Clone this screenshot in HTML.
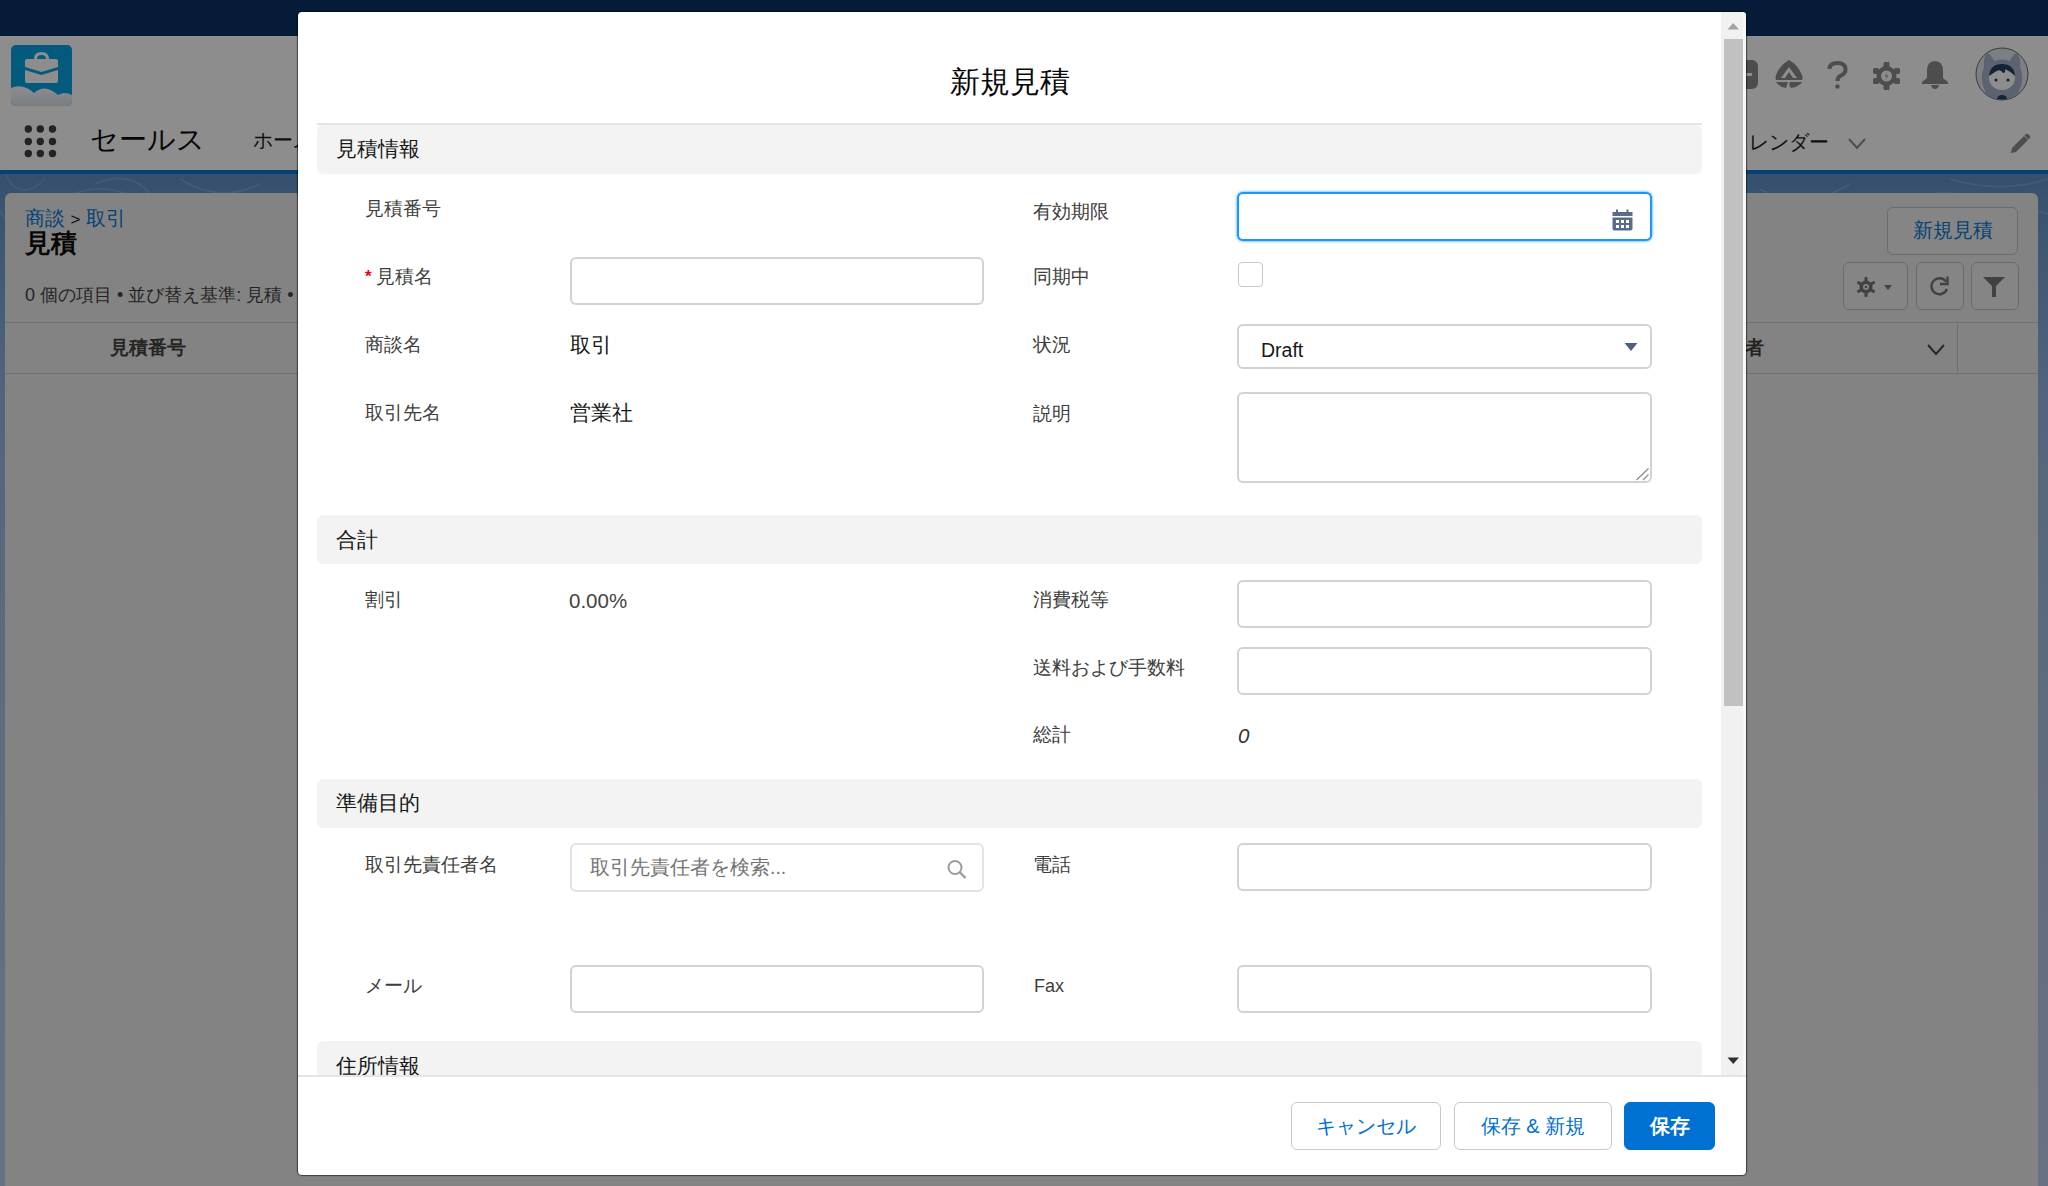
<!DOCTYPE html>
<html><head><meta charset="utf-8">
<style>
*{box-sizing:border-box;margin:0;padding:0}
html,body{width:2048px;height:1186px;overflow:hidden;background:#fff;font-family:"Liberation Sans",sans-serif;color:#181818}
.a{position:absolute}
/* background page */
#topbar{left:0;top:0;width:2048px;height:36px;background:#032d60}
#hdr{left:0;top:36px;width:2048px;height:134px;background:#fff}
#brand{left:0;top:170px;width:2048px;height:4px;background:#0070d2}
#bgblue{left:0;top:174px;width:2048px;height:1012px;background:linear-gradient(#5a8ec5 0%,#91b5e1 22%,#a7c1e3 52%,#b8ceea 100%)}
#card{left:5px;top:193px;width:2033px;height:1000px;background:#ededed;border-radius:6px}
#overlay{left:0;top:0;width:2048px;height:1186px;background:rgba(8,7,7,0.46)}
/* modal */
#modal{left:298px;top:12px;width:1448px;height:1163px;background:#fff;border-radius:4px;overflow:hidden;box-shadow:0 0 1px 1px rgba(0,0,0,.55)}
.lbl{font-size:19px;color:#3e3e3c;white-space:nowrap}
.val{font-size:21px;color:#181818;white-space:nowrap}
.sec{left:317px;width:1385px;height:49px;background:#f3f3f3;border-radius:6px}
.sect{left:336px;font-size:21px;color:#181818;white-space:nowrap}
.inp{height:48px;border:2px solid #d2d2d2;border-radius:6px;background:#fff}
.btn{height:48px;border:1.5px solid #c9c9c9;border-radius:6px;background:#fff;color:#0070d2;font-size:20px;text-align:center;line-height:47px;white-space:nowrap}
.ttl{font-size:30px;line-height:30px;color:#080707;white-space:nowrap}
.focus{border:2px solid #1b96ff;box-shadow:0 0 3px #1b96ff}
.ph{color:#747474;font-size:19.5px}
.pri{background:#0070d2;border-color:#0070d2;color:#fff;font-weight:bold}
.lbl,.val,.sect{line-height:1}
.cbtn{border:1.5px solid #c0c0c0;border-radius:6px;background:#f0f0f0;white-space:nowrap}
</style></head><body>
<div id="topbar" class="a"></div>
<div id="hdr" class="a"></div>
<div id="brand" class="a"></div>
<div id="bgblue" class="a"></div>
<svg class="a" style="left:0;top:174px" width="2048" height="60" viewBox="0 0 2048 60" fill="none" stroke="rgba(255,255,255,0.18)" stroke-width="1.5">
  <path d="M5 0 Q20 30 45 5"/><path d="M40 40 Q100 -10 160 40"/><path d="M60 55 Q110 10 170 50"/><path d="M10 50 Q-10 30 0 10"/>
  <path d="M95 10 Q130 -5 150 20"/><path d="M180 5 Q220 30 260 10"/><path d="M230 50 Q260 20 295 40"/>
  <path d="M1760 15 Q1800 40 1850 10"/><path d="M1880 50 Q1930 0 1990 30"/><path d="M1950 5 Q2000 20 2048 5"/><path d="M2000 55 Q2030 30 2048 40"/>
</svg>
<div id="card" class="a"></div>
<!-- logo -->
<svg class="a" style="left:11px;top:45px" width="61" height="61" viewBox="0 0 61 61">
  <defs><clipPath id="lc"><rect x="0" y="0" width="61" height="61" rx="5"/></clipPath>
  <linearGradient id="cg" x1="0" y1="0" x2="0" y2="1"><stop offset="0" stop-color="#fff"/><stop offset="1" stop-color="#d6e4ee"/></linearGradient></defs>
  <g clip-path="url(#lc)">
    <rect width="61" height="61" fill="#00a1e0"/>
    <path d="M0 43 Q12 38 23 48 Q34 38 47 50 Q54 46 61 50 V61 H0 Z" fill="url(#cg)"/>
  </g>
  <path d="M24.5 14 Q24.5 8.5 30.5 8.5 Q36.5 8.5 36.5 14" fill="none" stroke="#fff" stroke-width="3"/>
  <path d="M14 16 Q14 14 16 14 H45 Q47 14 47 16 V22 L30.5 27 L14 22 Z" fill="#fff"/>
  <path d="M14 25 L30.5 30 L47 25 V36 Q47 38 45 38 H16 Q14 38 14 36 Z" fill="#fff"/>
  </svg>
<!-- app launcher dots -->
<svg class="a" style="left:24px;top:125px" width="34" height="34" viewBox="0 0 34 34" fill="#3c3c3c">
  <circle cx="4.3" cy="4" r="3.7"/><circle cx="16.3" cy="4" r="3.7"/><circle cx="28.5" cy="4" r="3.7"/>
  <circle cx="4.3" cy="16.5" r="3.7"/><circle cx="16.3" cy="16.5" r="3.7"/><circle cx="28.5" cy="16.5" r="3.7"/>
  <circle cx="4.3" cy="28.5" r="3.7"/><circle cx="16.3" cy="28.5" r="3.7"/><circle cx="28.5" cy="28.5" r="3.7"/>
</svg>
<div class="a" style="left:90px;top:126px;font-size:28px;line-height:1;color:#080707;white-space:nowrap">セールス</div>
<div class="a" style="left:253px;top:130px;font-size:20px;line-height:1;color:#181818;white-space:nowrap">ホーム</div>
<div class="a" style="left:1729px;top:132px;font-size:20px;line-height:1;color:#181818;white-space:nowrap">カレンダー</div>
<svg class="a" style="left:1847px;top:137px" width="20" height="14" viewBox="0 0 20 14"><path d="M2 2 L10 11 L18 2" fill="none" stroke="#8a8a8a" stroke-width="2"/></svg>
<svg class="a" style="left:2010px;top:133px" width="21" height="21" viewBox="0 0 21 21" fill="#8a8a8a"><path d="M14 3 L18 7 L6 19 L1 20 L2 15 Z"/><path d="M15.5 1.5 Q17 0 18.5 1.5 L19.5 2.5 Q21 4 19.5 5.5 L18.5 6.5 L14.5 2.5 Z"/></svg>
<!-- header right icons -->
<svg class="a" style="left:1740px;top:59px" width="20" height="31" viewBox="0 0 20 31"><rect x="-10" y="1" width="28" height="29" rx="6" fill="#8a8a8a"/><rect x="0" y="14" width="12" height="3" fill="#fff"/></svg>
<svg class="a" style="left:1774px;top:59px" width="30" height="30" viewBox="0 0 30 30" fill="#8a8a8a">
  <path d="M15 1 Q24 6 28 16 Q29 19 28 21 H2 Q1 19 2 16 Q6 6 15 1 Z M15 8 L7 19 H11 L15 13 L19 19 H23 Z"/>
  <path d="M2 23 H14 L12 29 Q5 28 2 23 Z M16 23 H28 Q25 28 17 29 L15 26 Z"/>
</svg>
<svg class="a" style="left:1827px;top:61px" width="21" height="29" viewBox="0 0 21 29" fill="none" stroke="#8a8a8a" stroke-width="4">
  <path d="M2.5 8 Q2.5 2 10.5 2 Q18.5 2 18.5 8.5 Q18.5 12.5 14 14.5 Q10.5 16 10.5 20"/><circle cx="10.5" cy="25.5" r="2.2" fill="#8a8a8a" stroke="none"/>
</svg>
<svg class="a" style="left:1872px;top:61px" width="29" height="30" viewBox="0 0 29 30">
  <g fill="#8a8a8a"><circle cx="14.5" cy="15" r="10"/>
  <rect x="11.5" y="1" width="6" height="6" rx="1.5"/><rect x="11.5" y="23" width="6" height="6" rx="1.5"/>
  <rect x="1" y="7" width="6" height="6" rx="1.5"/><rect x="22" y="7" width="6" height="6" rx="1.5"/>
  <rect x="1" y="17" width="6" height="6" rx="1.5"/><rect x="22" y="17" width="6" height="6" rx="1.5"/></g>
  <circle cx="14.5" cy="15" r="5.5" fill="#fff"/><path d="M15.5 11 L12.5 15.5 H15 L13.5 19 L16.5 14.5 H14 Z" fill="#8a8a8a"/>
</svg>
<svg class="a" style="left:1920px;top:60px" width="30" height="30" viewBox="0 0 30 30" fill="#8a8a8a">
  <path d="M15 1 Q23 1 23 11 V18 L28 22 V24 H2 V22 L7 18 V11 Q7 1 15 1 Z"/><path d="M11 25 H19 Q18 29 15 29 Q12 29 11 25 Z"/>
</svg>
<svg class="a" style="left:1975px;top:47px" width="54" height="54" viewBox="0 0 54 54">
  <defs><clipPath id="av"><circle cx="27" cy="27" r="25.5"/></clipPath></defs>
  <circle cx="27" cy="27" r="26" fill="#dfe6ee" stroke="#666" stroke-width="1"/>
  <g clip-path="url(#av)">
    <path d="M9 20 Q8 9 13 6 Q18 10 19 14 Q27 11 35 14 Q36 10 41 6 Q46 9 45 20 Q50 32 44 44 Q42 54 27 54 Q12 54 10 44 Q4 32 9 20 Z" fill="#9fb2c8"/>
    <ellipse cx="27" cy="31" rx="13" ry="12" fill="#fff"/>
    <path d="M14 29 Q15 17 27 17 Q39 17 40 29 Q35 24 30 22 Q31 26 28 26 Q25 21 20 25 Q17 27 14 29 Z" fill="#1e3a5f"/>
    <circle cx="21" cy="33" r="1.6" fill="#1e3a5f"/><circle cx="33" cy="33" r="1.6" fill="#1e3a5f"/>
    <ellipse cx="27" cy="52" rx="5" ry="4" fill="#1e3a5f"/>
  </g>
</svg>
<!-- card content -->
<div class="a" style="left:25px;top:209px;font-size:19.5px;line-height:1;color:#0176d3;white-space:nowrap">商談 <span style="color:#181818;font-size:17px">&gt;</span> 取引</div>
<div class="a" style="left:25px;top:230px;font-size:26px;line-height:1;font-weight:bold;color:#080707;white-space:nowrap">見積</div>
<div class="a" style="left:25px;top:286px;font-size:18px;line-height:1;color:#3e3e3c;white-space:nowrap">0 個の項目 • 並び替え基準: 見積 • 数秒前に更新されました</div>
<div class="a" style="left:5px;top:322px;width:2033px;height:1px;background:#c9c9c9"></div>
<div class="a" style="left:5px;top:373px;width:2033px;height:1px;background:#c9c9c9"></div>
<div class="a" style="left:110px;top:338px;font-size:19px;line-height:1;font-weight:bold;color:#3e3e3c;white-space:nowrap">見積番号</div>
<div class="a" style="left:1707px;top:338px;font-size:19px;line-height:1;font-weight:bold;color:#3e3e3c;white-space:nowrap">所有者</div>
<svg class="a" style="left:1926px;top:343px" width="20" height="14" viewBox="0 0 20 14"><path d="M2 2 L10 11 L18 2" fill="none" stroke="#444" stroke-width="2"/></svg>
<div class="a" style="left:1957px;top:323px;width:1px;height:50px;background:#c9c9c9"></div>
<div class="a cbtn" style="left:1887px;top:207px;width:131px;height:48px;color:#0176d3;font-size:19.5px;line-height:45px;text-align:center">新規見積</div>
<div class="a cbtn" style="left:1843px;top:262px;width:65px;height:48px"></div>
<div class="a cbtn" style="left:1916px;top:262px;width:48px;height:48px"></div>
<div class="a cbtn" style="left:1971px;top:262px;width:48px;height:48px"></div>
<svg class="a" style="left:1856px;top:276px" width="40" height="22" viewBox="0 0 40 22">
  <g fill="#747474"><circle cx="10" cy="11" r="6.5"/><rect x="8.5" y="1" width="3" height="20" rx="1"/><rect x="8.5" y="1" width="3" height="20" rx="1" transform="rotate(60 10 11)"/><rect x="8.5" y="1" width="3" height="20" rx="1" transform="rotate(120 10 11)"/></g>
  <circle cx="10" cy="11" r="3" fill="#f3f3f3"/><circle cx="10" cy="11" r="1.3" fill="#747474"/>
  <path d="M28 9 H36 L32 14 Z" fill="#747474"/>
</svg>
<svg class="a" style="left:1929px;top:276px" width="22" height="20" viewBox="0 0 22 20"><path d="M17 5.5 A8 8 0 1 0 18 13" fill="none" stroke="#747474" stroke-width="2.4"/><path d="M18.5 0.5 V8 H11" fill="none" stroke="#747474" stroke-width="2.4"/></svg>
<svg class="a" style="left:1982px;top:276px" width="24" height="22" viewBox="0 0 24 22"><path d="M1 1 H23 L14 10 V21 H10 V10 Z" fill="#747474"/></svg>
<div id="overlay" class="a"></div>

<div id="modal" class="a"></div>
<div id="mc" class="a" style="left:0;top:0;width:2048px;height:1186px">
  <div class="a ttl" style="left:298px;top:67px;width:1424px;text-align:center">新規見積</div>
  <div class="a" style="left:317px;top:123px;width:1385px;height:2px;background:#e5e5e5"></div>
  <!-- section 1 -->
  <div class="a sec" style="top:125px"></div>
  <div class="a sect" style="top:138px">見積情報</div>
  <div class="a lbl" style="left:365px;top:199px">見積番号</div>
  <div class="a lbl" style="left:365px;top:267px"><span style="color:#ea001e;font-size:17px;font-weight:bold;position:relative;top:-1px;margin-right:4px">*</span>見積名</div>
  <div class="a inp" style="left:570px;top:257px;width:414px"></div>
  <div class="a lbl" style="left:365px;top:335px">商談名</div>
  <div class="a val" style="left:570px;top:334px">取引</div>
  <div class="a lbl" style="left:365px;top:403px">取引先名</div>
  <div class="a val" style="left:570px;top:402px">営業社</div>

  <div class="a lbl" style="left:1033px;top:202px">有効期限</div>
  <div class="a inp focus" style="left:1237px;top:192px;width:415px;height:49px"></div>
  <div class="a lbl" style="left:1033px;top:267px">同期中</div>
  <div class="a" style="left:1238px;top:262px;width:25px;height:25px;border:1.5px solid #c9c9c9;border-radius:4px;background:#fff"></div>
  <div class="a lbl" style="left:1033px;top:335px">状況</div>
  <div class="a inp" style="left:1237px;top:324px;width:415px;height:45px"></div>
  <div class="a val" style="left:1261px;top:341px;font-size:19.5px">Draft</div>
  <div class="a lbl" style="left:1033px;top:404px">説明</div>
  <div class="a inp" style="left:1237px;top:392px;width:415px;height:91px"></div>

  <!-- section 2 -->
  <div class="a sec" style="top:515px"></div>
  <div class="a sect" style="top:529px">合計</div>
  <div class="a lbl" style="left:365px;top:590px">割引</div>
  <div class="a val" style="left:569px;top:591px;font-size:20.5px;color:#444">0.00%</div>
  <div class="a lbl" style="left:1033px;top:590px">消費税等</div>
  <div class="a inp" style="left:1237px;top:580px;width:415px"></div>
  <div class="a lbl" style="left:1033px;top:658px">送料および手数料</div>
  <div class="a inp" style="left:1237px;top:647px;width:415px"></div>
  <div class="a lbl" style="left:1033px;top:725px">総計</div>
  <div class="a val" style="left:1238px;top:726px;font-size:20.5px;font-style:italic;color:#333">0</div>

  <!-- section 3 -->
  <div class="a sec" style="top:779px"></div>
  <div class="a sect" style="top:792px">準備目的</div>
  <div class="a lbl" style="left:365px;top:855px">取引先責任者名</div>
  <div class="a inp" style="left:570px;top:843px;width:414px;height:49px;border-color:#e3e3e3"></div>
  <div class="a val ph" style="left:590px;top:858px">取引先責任者を検索...</div>
  <div class="a lbl" style="left:1033px;top:855px">電話</div>
  <div class="a inp" style="left:1237px;top:843px;width:415px"></div>
  <div class="a lbl" style="left:365px;top:976px">メール</div>
  <div class="a inp" style="left:570px;top:965px;width:414px"></div>
  <div class="a lbl" style="left:1034px;top:977px;font-size:18px">Fax</div>
  <div class="a inp" style="left:1237px;top:965px;width:415px"></div>

  <!-- section 4 (clipped) -->
  <div class="a" style="left:298px;top:1041px;width:1424px;height:34px;overflow:hidden">
    <div class="a sec" style="left:19px;top:0"></div>
    <div class="a sect" style="left:38px;top:14px">住所情報</div>
  </div>

  <!-- scrollbar -->
  <div class="a" style="left:1721px;top:12px;width:25px;height:1063px;background:#f1f1f1;border-top-right-radius:4px;box-shadow:inset -3px 0 0 #f8f8f8"></div>
  <div class="a" style="left:1724px;top:39px;width:19px;height:667px;background:#c1c1c1"></div>


  <!-- calendar icon -->
  <svg class="a" style="left:1612px;top:208px" width="21" height="23" viewBox="0 0 21 23">
    <rect x="0.5" y="4" width="20" height="4" fill="#5a6b8c"/>
    <rect x="4" y="1.5" width="2" height="4" fill="#5a6b8c"/>
    <rect x="14.5" y="1.5" width="2" height="4" fill="#5a6b8c"/>
    <path d="M0.5 9.5 H20.5 V20.5 Q20.5 22.5 18.5 22.5 H2.5 Q0.5 22.5 0.5 20.5 Z" fill="#5a6b8c"/>
    <g fill="#fff"><rect x="4" y="12" width="3" height="3"/><rect x="9" y="12" width="3" height="3"/><rect x="14" y="12" width="3" height="3"/>
    <rect x="4" y="17" width="3" height="3"/><rect x="9" y="17" width="3" height="3"/><rect x="14" y="17" width="3" height="3"/></g>
  </svg>
  <!-- select arrow -->
  <svg class="a" style="left:1624px;top:342px" width="14" height="10" viewBox="0 0 14 10"><path d="M0.5 1 H13.5 L7 9 Z" fill="#4f5f80"/></svg>
  <!-- textarea resize -->
  <svg class="a" style="left:1634px;top:466px" width="16" height="16" viewBox="0 0 16 16"><path d="M2.5 14 L14.5 2.5 M9 14 L14.5 8.5" stroke="#8a8a8a" stroke-width="1.2"/></svg>
  <!-- search icon -->
  <svg class="a" style="left:946px;top:859px" width="22" height="22" viewBox="0 0 22 22"><circle cx="9" cy="8.5" r="6.5" fill="none" stroke="#9c9c9c" stroke-width="2"/><path d="M13.5 13 L19.5 19" stroke="#9c9c9c" stroke-width="2.4"/></svg>
  <!-- scrollbar arrows -->
  <svg class="a" style="left:1727px;top:22px" width="13" height="8" viewBox="0 0 13 8"><path d="M0.5 7.5 H12 L6.25 1 Z" fill="#a3a3a3"/></svg>
  <svg class="a" style="left:1727px;top:1057px" width="13" height="8" viewBox="0 0 13 8"><path d="M0.5 0.5 H12 L6.25 7 Z" fill="#303030"/></svg>
  <!-- footer -->
  <div class="a" style="left:298px;top:1075px;width:1448px;height:2px;background:#e5e5e5"></div>
  <div class="a btn" style="left:1291px;top:1102px;width:150px">キャンセル</div>
  <div class="a btn" style="left:1454px;top:1102px;width:158px">保存 &amp; 新規</div>
  <div class="a btn pri" style="left:1624px;top:1102px;width:91px">保存</div>
</div>
</body></html>
